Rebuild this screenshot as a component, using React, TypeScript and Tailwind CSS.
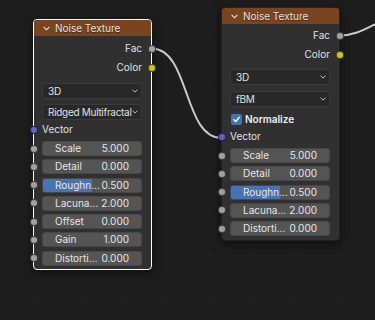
import clsx from "clsx";

type SocketColor = "gray" | "yellow" | "blue";

const socketBg: Record<SocketColor, string> = {
  gray: "bg-[#a1a1a1]",
  yellow: "bg-[#c7c729]",
  blue: "bg-[#6363c7]",
};

function Socket({ color, side }: { color: SocketColor; side: "left" | "right" }) {
  return (
    <span
      className={clsx(
        "absolute top-1/2 -translate-y-1/2 w-[8px] h-[8px] rounded-full border border-black/60 z-10",
        socketBg[color],
        side === "left" ? "-left-[4.5px]" : "-right-[4.5px]"
      )}
    />
  );
}

function Chevron({ className }: { className?: string }) {
  return (
    <svg viewBox="0 0 8 5" className={className} fill="none" stroke="currentColor" strokeWidth="1.2" strokeLinecap="round" strokeLinejoin="round">
      <path d="M1 1 L4 4 L7 1" />
    </svg>
  );
}

function Header() {
  return (
    <div className="h-[16px] bg-[#7a4420] rounded-t-[3px] flex items-center pl-[9px] gap-[5px] text-[#e4e4e4]">
      <Chevron className="w-[7px] h-[5px]" />
      <span className="text-[10px] leading-none [text-shadow:0_1px_1px_rgba(0,0,0,0.5)]">Noise Texture</span>
    </div>
  );
}

function OutputRow({ label, color }: { label: string; color: SocketColor }) {
  return (
    <div className="relative h-[19px] flex items-center justify-end pr-[9px] text-[10px] text-[#e0e0e0]">
      {label}
      <Socket color={color} side="right" />
    </div>
  );
}

function Dropdown({ value, className }: { value: string; className?: string }) {
  return (
    <div
      className={clsx(
        "h-[16px] ml-[8px] mr-[9px] rounded-[3px] bg-[#282828] border border-[#3a3a3a] flex items-center pl-[5px] pr-[3px] text-[10px] text-[#e0e0e0]",
        className
      )}
    >
      <span className="flex-1 whitespace-nowrap tracking-[-0.3px]">{value}</span>
      <Chevron className="w-[6px] h-[4px] shrink-0 text-[#cfcfcf]" />
    </div>
  );
}

function Field({ label, value, fill }: { label: string; value: string; fill?: boolean }) {
  return (
    <div className="relative h-[15px]">
      <Socket color="gray" side="left" />
      <div className="relative h-full ml-[8px] mr-[9px] rounded-[3px] bg-[#545454] border border-[#474747] overflow-hidden">
        {fill && <div className="absolute inset-y-0 left-0 w-1/2 bg-[#4772b3]" />}
        <div className="relative h-full flex items-center justify-between pl-[12px] pr-[12px] text-[10px] text-[#e6e6e6]">
          <span>{label}</span>
          <span>{value}</span>
        </div>
      </div>
    </div>
  );
}

function VectorRow() {
  return (
    <div className="relative h-[19px] flex items-center pl-[8px] text-[10px] text-[#e0e0e0]">
      <Socket color="blue" side="left" />
      Vector
    </div>
  );
}

export default function App() {
  return (
    <div className="relative w-[375px] h-[320px] overflow-hidden bg-[#1d1d1d] bg-[radial-gradient(circle,#242424_1px,transparent_1.2px)] bg-[size:43px_43px] bg-[position:16px_18px] font-[family-name:Inter,sans-serif]">
      <svg className="absolute inset-0" width="375" height="320" fill="none">
        <path d="M151.5 48.5 C190 48.5, 183 138, 221.5 138" stroke="#c9c9d8" strokeWidth="2" />
        <path d="M339.5 35.5 C368 35.5, 378 14, 420 12" stroke="#c9c9d8" strokeWidth="2" />
      </svg>

      {/* node 1, selected */}
      <div className="absolute left-[33px] top-[19px] w-[119px] border border-white rounded-[4px] bg-[#303030] shadow-[0_3px_8px_rgba(0,0,0,0.5)] pb-[3px]">
        <Header />
        <div className="pt-[3px]">
          <OutputRow label="Fac" color="gray" />
          <OutputRow label="Color" color="yellow" />
          <Dropdown value="3D" className="mt-[6px]" />
          <Dropdown value="Ridged Multifractal" className="mt-[5px]" />
          <VectorRow />
          <div className="mt-[2px] flex flex-col gap-[3.3px]">
            <Field label="Scale" value="5.000" />
            <Field label="Detail" value="0.000" />
            <Field label="Roughn..." value="0.500" fill />
            <Field label="Lacuna..." value="2.000" />
            <Field label="Offset" value="0.000" />
            <Field label="Gain" value="1.000" />
            <Field label="Distorti..." value="0.000" />
          </div>
        </div>
      </div>

      {/* node 2 */}
      <div className="absolute left-[221px] top-[7px] w-[119px] border border-[#222] rounded-[4px] bg-[#303030] shadow-[0_3px_8px_rgba(0,0,0,0.5)] pb-[4px]">
        <Header />
        <div className="pt-[2px]">
          <OutputRow label="Fac" color="gray" />
          <OutputRow label="Color" color="yellow" />
          <Dropdown value="3D" className="mt-[5px]" />
          <Dropdown value="fBM" className="mt-[6px]" />
          <div className="mt-[4px] h-[16px] flex items-center pl-[9px] gap-[3px] text-[10px] text-[#f0f0f0] font-semibold">
            <span className="w-[11px] h-[11px] rounded-[2px] bg-[#4772b3] flex items-center justify-center">
              <svg viewBox="0 0 10 10" className="w-[9px] h-[9px]" fill="none" stroke="white" strokeWidth="1.6" strokeLinecap="round" strokeLinejoin="round">
                <path d="M2 5.2 L4.2 7.3 L8 2.6" />
              </svg>
            </span>
            Normalize
          </div>
          <VectorRow />
          <div className="mt-[2px] flex flex-col gap-[3.3px]">
            <Field label="Scale" value="5.000" />
            <Field label="Detail" value="0.000" />
            <Field label="Roughn..." value="0.500" fill />
            <Field label="Lacuna..." value="2.000" />
            <Field label="Distorti..." value="0.000" />
          </div>
        </div>
      </div>
    </div>
  );
}
